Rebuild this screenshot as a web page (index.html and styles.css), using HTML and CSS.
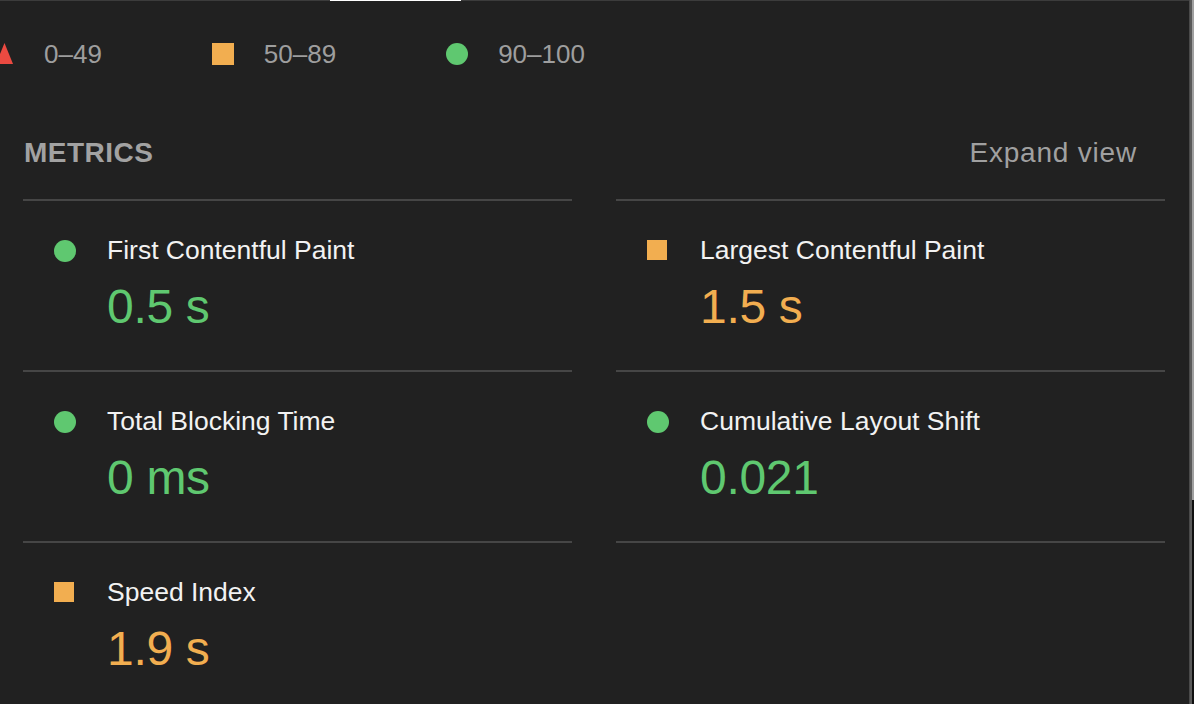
FILE: index.html
```html
<!DOCTYPE html>
<html lang="en">
<head>
<meta charset="utf-8">
<title>Metrics</title>
<link rel="stylesheet" href="styles.css">
</head>
<body>
<div class="page">
  <div class="main">
    <div class="topline"><span class="topline-active"></span></div>
    <div class="content">
      <div class="legend">
        <div class="legend-item">
          <svg class="legend-fail" width="13" height="22" viewBox="0 0 13 22"><polygon points="4.5,0 13,21 -4,21" fill="#eb4a41"/></svg>
          <span class="legend-text">0–49</span>
        </div>
        <div class="legend-item">
          <span class="legend-icon square-lg"></span>
          <span class="legend-text">50–89</span>
        </div>
        <div class="legend-item">
          <span class="legend-icon circle-lg"></span>
          <span class="legend-text">90–100</span>
        </div>
      </div>

      <div class="metrics-header">
        <span class="metrics-title">METRICS</span>
        <span class="expand">Expand view</span>
      </div>

      <div class="metrics-grid">
        <div class="metric top">
          <span class="score"><span class="dot"></span></span>
          <div class="metric-body">
            <div class="metric-title">First Contentful Paint</div>
            <div class="metric-value pass">0.5 s</div>
          </div>
        </div>
        <div class="metric top">
          <span class="score"><span class="sq"></span></span>
          <div class="metric-body">
            <div class="metric-title">Largest Contentful Paint</div>
            <div class="metric-value average">1.5 s</div>
          </div>
        </div>
        <div class="metric">
          <span class="score"><span class="dot"></span></span>
          <div class="metric-body">
            <div class="metric-title">Total Blocking Time</div>
            <div class="metric-value pass">0 ms</div>
          </div>
        </div>
        <div class="metric">
          <span class="score"><span class="dot"></span></span>
          <div class="metric-body">
            <div class="metric-title">Cumulative Layout Shift</div>
            <div class="metric-value pass">0.021</div>
          </div>
        </div>
        <div class="metric">
          <span class="score"><span class="sq"></span></span>
          <div class="metric-body">
            <div class="metric-title">Speed Index</div>
            <div class="metric-value average">1.9 s</div>
          </div>
        </div>
      </div>
    </div>
  </div>
  <div class="scrollbar"><div class="thumb"></div></div>
</div>
</body>
</html>
```

FILE: styles.css
```css
* { box-sizing: border-box; }

html, body {
  margin: 0;
  padding: 0;
  background: #212121;
}

body {
  font-family: "Liberation Sans", Arial, Helvetica, sans-serif;
  color: #f0f0f0;
}

.page {
  display: flex;
  width: 1194px;
  height: 704px;
  overflow: hidden;
}

.main {
  flex: 1;
  display: flex;
  flex-direction: column;
  border-right: 1px solid #4a4a4a;
  overflow: hidden;
}

.scrollbar {
  width: 4px;
  background: #111111;
  border-left: 2px solid #5a5a5a;
}

.thumb {
  width: 2px;
  height: 500px;
  background: #a0a0a0;
}

.topline {
  height: 1px;
  background: #3c3c3c;
  display: flex;
  flex-shrink: 0;
}

.topline-active {
  margin-left: 330px;
  width: 131px;
  background: #ffffff;
}

.content {
  padding: 0 24px 0 23px;
}

/* legend */
.legend {
  display: flex;
  align-items: center;
  gap: 110px;
  margin-top: 37px;
  margin-left: -23px;
  height: 32px;
}

.legend-item {
  display: flex;
  align-items: center;
  gap: 30px;
}

.legend-fail {
  display: block;
  margin-top: -1px;
  margin-right: 1px;
}

.legend-icon {
  display: block;
  width: 22px;
  height: 22px;
}

.square-lg { background: #f2ae50; }
.circle-lg { background: #5fc870; border-radius: 50%; }

.legend-text {
  font-size: 26px;
  line-height: 32px;
  color: #9e9e9e;
}

/* header */
.metrics-header {
  display: flex;
  justify-content: space-between;
  align-items: baseline;
  margin-top: 67px;
  height: 32px;
  padding-left: 1px;
  padding-right: 28px;
}

.metrics-title {
  font-size: 28px;
  line-height: 32px;
  font-weight: bold;
  color: #a2a2a2;
  letter-spacing: 0.5px;
}

.expand {
  font-size: 28px;
  line-height: 32px;
  color: #a0a0a0;
  letter-spacing: 0.8px;
}

/* grid */
.metrics-grid {
  margin-top: 30px;
  display: grid;
  grid-template-columns: 1fr 1fr;
  column-gap: 44px;
}

.metric {
  display: flex;
  padding: 33px 0 35px 31px;
  border-bottom: 2px solid #464646;
}

.metric.top {
  border-top: 2px solid #464646;
}

.score {
  width: 22px;
  flex-shrink: 0;
  padding-top: 6px;
  margin-right: 31px;
}

.dot {
  display: block;
  width: 22px;
  height: 22px;
  border-radius: 50%;
  background: #5fc870;
}

.sq {
  display: block;
  width: 20px;
  height: 20px;
  background: #f2ae50;
}

.metric-title {
  font-size: 26.5px;
  line-height: 32px;
  color: #f2f2f2;
}

.metric-value {
  margin-top: 13px;
  font-size: 48px;
  line-height: 56px;
  letter-spacing: -0.3px;
}

.pass { color: #5fc870; }
.average { color: #f2ae50; }
```
